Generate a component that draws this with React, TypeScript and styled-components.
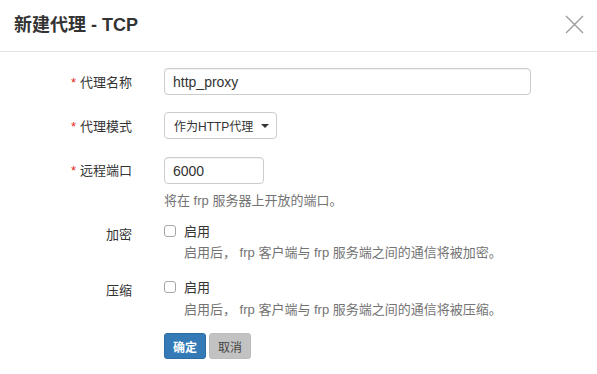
import styled, { createGlobalStyle } from "styled-components";

const GlobalStyle = createGlobalStyle`
  html, body {
    margin: 0;
    padding: 0;
    background: #ffffff;
  }
  body {
    font-family: "Liberation Sans", "Noto Sans CJK SC", Arial, sans-serif;
    color: #333333;
  }
`;

const Modal = styled.div`
  width: 597px;
  height: 374px;
  background: #ffffff;
  overflow: hidden;
`;

const Header = styled.div`
  height: 51px;
  border-bottom: 1px solid #e5e5e5;
  display: flex;
  align-items: center;
  justify-content: space-between;
  padding: 0 13px 0 14px;
`;

const Title = styled.h4`
  margin: 0;
  font-size: 18px;
  font-weight: bold;
  line-height: 20px;
  color: #333333;
  margin-top: -2px;
`;

const Close = styled.button`
  width: 20px;
  height: 20px;
  padding: 0;
  border: none;
  background: none;
  display: flex;
  align-items: center;
  justify-content: center;
  margin-top: -3px;
`;

const Body = styled.div`
  padding-top: 16px;
`;

const Row = styled.div<{ $top: number }>`
  display: grid;
  grid-template-columns: 132px 1fr;
  column-gap: 32px;
  margin-top: ${(p) => p.$top}px;
`;

const Label = styled.label<{ $pad: number }>`
  font-size: 13px;
  line-height: 17px;
  text-align: right;
  padding-top: ${(p) => p.$pad}px;
  white-space: nowrap;
`;

const Star = styled.span`
  color: #e8271d;
  margin-right: 4px;
`;

const Control = styled.div`
  display: flex;
  flex-direction: column;
  align-items: flex-start;
`;

const TextInput = styled.input<{ $width: number }>`
  box-sizing: border-box;
  width: ${(p) => p.$width}px;
  height: 27px;
  border: 1px solid #cccccc;
  border-radius: 4px;
  padding: 0 8px;
  font-family: inherit;
  font-size: 14px;
  color: #333333;
  box-shadow: inset 0 1px 1px rgba(0, 0, 0, 0.06);
  outline: none;
`;

const SelectBox = styled.div`
  box-sizing: border-box;
  width: 113px;
  height: 27px;
  border: 1px solid #cccccc;
  border-radius: 4px;
  padding: 0 7px 0 9px;
  display: flex;
  align-items: center;
  justify-content: space-between;
  font-size: 12px;
  color: #333333;
`;

const Caret = styled.span`
  width: 0;
  height: 0;
  border-left: 4px solid transparent;
  border-right: 4px solid transparent;
  border-top: 4px solid #333333;
  margin-top: 1px;
`;

const Help = styled.div<{ $top: number; $indent?: number }>`
  font-size: 13px;
  line-height: 17px;
  color: #737373;
  margin-top: ${(p) => p.$top}px;
  padding-left: ${(p) => p.$indent ?? 0}px;
  white-space: nowrap;
`;

const CheckLine = styled.label`
  display: flex;
  align-items: center;
  height: 17px;
  font-size: 13px;
  color: #333333;
`;

const CheckBox = styled.span`
  box-sizing: border-box;
  width: 12px;
  height: 12px;
  border: 1px solid #a6a6a6;
  border-radius: 3px;
  background: #ffffff;
  margin-right: 8px;
`;

const Actions = styled.div`
  display: flex;
  gap: 3px;
`;

const Button = styled.button<{ $primary?: boolean }>`
  box-sizing: border-box;
  width: 42px;
  height: 26px;
  padding: 0;
  border-radius: 3px;
  font-family: inherit;
  font-size: 12px;
  font-weight: ${(p) => (p.$primary ? "bold" : "normal")};
  color: ${(p) => (p.$primary ? "#ffffff" : "#444444")};
  background: ${(p) => (p.$primary ? "#337ab7" : "#c2c2c2")};
  border: 1px solid ${(p) => (p.$primary ? "#2e6da4" : "#bdbdbd")};
`;

export default function App() {
  return (
    <Modal>
      <GlobalStyle />
      <Header>
        <Title>新建代理 - TCP</Title>
        <Close aria-label="close">
          <svg width="19" height="19" viewBox="0 0 19 19">
            <path d="M1 1 L18 18 M18 1 L1 18" stroke="#9a9a9a" strokeWidth="1.3" fill="none" />
          </svg>
        </Close>
      </Header>
      <Body>
        <Row $top={0}>
          <Label $pad={6}>
            <Star>*</Star>代理名称
          </Label>
          <Control>
            <TextInput $width={367} defaultValue="http_proxy" />
          </Control>
        </Row>
        <Row $top={17}>
          <Label $pad={6}>
            <Star>*</Star>代理模式
          </Label>
          <Control>
            <SelectBox>
              作为HTTP代理
              <Caret />
            </SelectBox>
          </Control>
        </Row>
        <Row $top={18}>
          <Label $pad={5}>
            <Star>*</Star>远程端口
          </Label>
          <Control>
            <TextInput $width={100} defaultValue="6000" />
            <Help $top={8}>将在 frp 服务器上开放的端口。</Help>
          </Control>
        </Row>
        <Row $top={13}>
          <Label $pad={4}>加密</Label>
          <Control>
            <CheckLine>
              <CheckBox />
              启用
            </CheckLine>
            <Help $top={5} $indent={20}>
              启用后， frp 客户端与 frp 服务端之间的通信将被加密。
            </Help>
          </Control>
        </Row>
        <Row $top={17}>
          <Label $pad={4}>压缩</Label>
          <Control>
            <CheckLine>
              <CheckBox />
              启用
            </CheckLine>
            <Help $top={6} $indent={20}>
              启用后， frp 客户端与 frp 服务端之间的通信将被压缩。
            </Help>
          </Control>
        </Row>
        <Row $top={15}>
          <div />
          <Actions>
            <Button $primary>确定</Button>
            <Button>取消</Button>
          </Actions>
        </Row>
      </Body>
    </Modal>
  );
}
